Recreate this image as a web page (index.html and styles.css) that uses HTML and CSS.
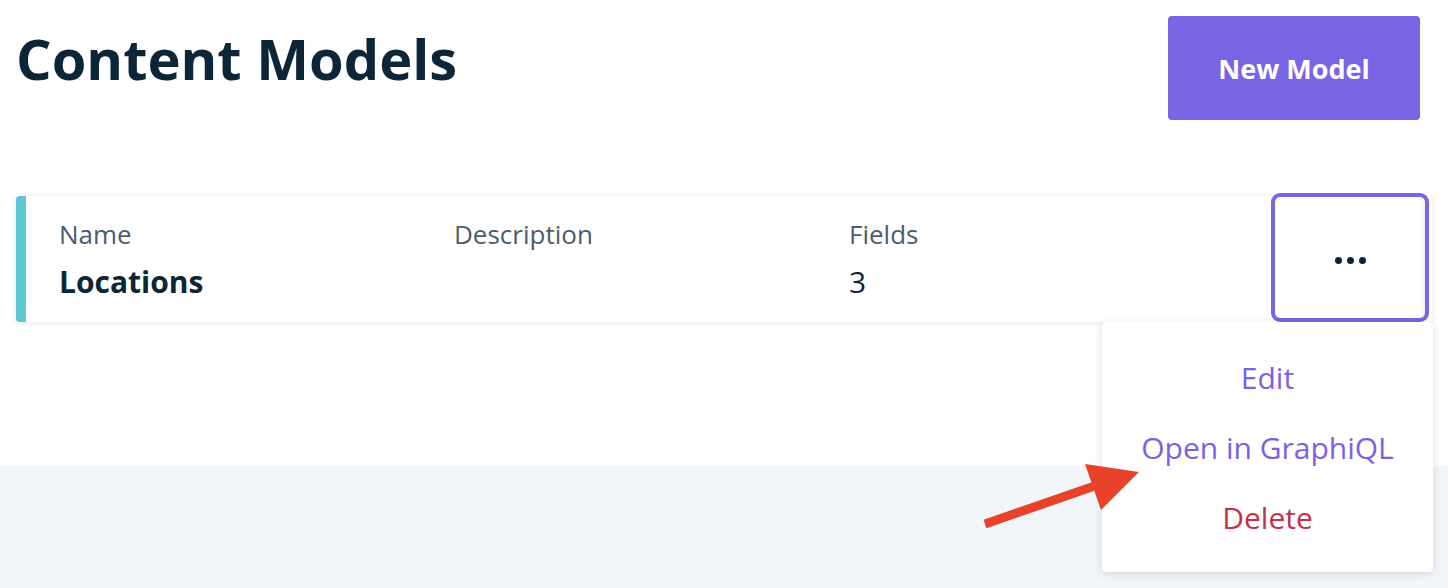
FILE: index.html
```html
<!DOCTYPE html>
<html lang="en">
<head>
<meta charset="utf-8">
<title>Content Models</title>
<link rel="stylesheet" href="styles.css">
</head>
<body>
<div class="page">
  <header class="header">
    <h1 class="title">Content Models</h1>
    <button class="btn-primary">New Model</button>
  </header>
  <section class="list">
    <div class="card">
      <div class="cols">
        <div class="col">
          <div class="label">Name</div>
          <div class="value value-bold">Locations</div>
        </div>
        <div class="col">
          <div class="label">Description</div>
          <div class="value"></div>
        </div>
        <div class="col">
          <div class="label">Fields</div>
          <div class="value">3</div>
        </div>
      </div>
      <button class="more" aria-label="More">
        <span class="dot"></span><span class="dot"></span><span class="dot"></span>
      </button>
      <ul class="menu">
        <li class="menu-item">Edit</li>
        <li class="menu-item">Open in GraphiQL</li>
        <li class="menu-item danger">Delete</li>
      </ul>
    </div>
  </section>
</div>
<div class="footer-bg"></div>
<svg class="annotation" width="180" height="80" viewBox="0 0 180 80" aria-hidden="true">
  <line x1="6" y1="74" x2="130" y2="31" stroke="#E8432A" stroke-width="9"/>
  <polygon points="106,14 160,22 122,60" fill="#E8432A"/>
</svg>
</body>
</html>
```

FILE: styles.css
```css
* { box-sizing: border-box; }
html, body { margin: 0; padding: 0; }
body {
  font-family: "Open Sans", "Noto Sans", sans-serif;
  background: #F3F6F9;
  width: 1448px;
  height: 588px;
  overflow: hidden;
  position: relative;
}
.page {
  background: #fff;
  height: 466px;
}
.header {
  display: flex;
  justify-content: space-between;
  align-items: flex-start;
  padding: 16px 28px 0 16px;
}
.title {
  margin: 9px 0 0 0;
  font-size: 56px;
  line-height: 1.2;
  font-weight: 700;
  color: #0D2637;
}
.btn-primary {
  width: 252px;
  height: 104px;
  border: none;
  border-radius: 4px;
  background: #7964E4;
  color: #fff;
  font-family: inherit;
  font-size: 27px;
  font-weight: 700;
}
.list {
  padding: 76px 16px 0 16px;
}
.card {
  position: relative;
  display: flex;
  height: 126px;
  background: #fff;
  border-left: 10px solid #5BC8D4;
  border-radius: 4px;
  box-shadow: 0 1px 6px rgba(13, 38, 55, 0.12);
}
.cols {
  flex: 1;
  display: grid;
  grid-template-columns: 395px 395px 1fr;
  padding: 20px 0 0 33px;
}
.label {
  font-size: 26px;
  line-height: 36px;
  color: #4A5D6C;
}
.value {
  margin-top: 10px;
  font-size: 30px;
  line-height: 40px;
  color: #0D2637;
  min-height: 40px;
}
.value-bold { font-weight: 700; }
.more {
  width: 150px;
  margin: 1px 7px 4px 0;
  border: none;
  border-radius: 5px;
  outline: 4px solid #7B64E6;
  background: #fff;
  box-shadow: inset -6px 0 6px -4px rgba(0,0,0,0.08);
  display: flex;
  align-items: center;
  justify-content: center;
  gap: 5px;
  padding: 5px 0 0 0;
}
.dot {
  width: 7px;
  height: 7px;
  border-radius: 50%;
  background: #0D2637;
}
.menu {
  position: absolute;
  top: 100%;
  right: -1px;
  width: 331px;
  margin: 0;
  padding: 20px 0;
  list-style: none;
  background: #fff;
  border-radius: 4px;
  box-shadow: 0 2px 10px rgba(13, 38, 55, 0.14);
  z-index: 2;
}
.menu-item {
  height: 70px;
  display: flex;
  align-items: center;
  justify-content: center;
  font-size: 30px;
  color: #7A61E6;
}
.menu-item.danger { color: #C62F48; }
.footer-bg {
  height: 122px;
  background: #F3F6F9;
}
.annotation {
  position: absolute;
  left: 979px;
  top: 450px;
  z-index: 3;
}
```
